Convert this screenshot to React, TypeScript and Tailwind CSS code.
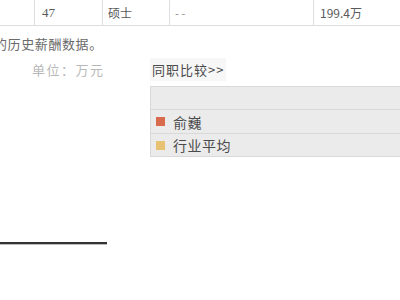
import React from "react";

const font = { fontFamily: '"Noto Sans CJK SC", "Liberation Sans", sans-serif' };

export default function App() {
  return (
    <div className="w-[400px] h-[300px] overflow-hidden bg-white" style={font}>
      {/* table row */}
      <div className="flex h-[26px] border-b border-[#dedede] text-[12px] text-[#5a5a5a] leading-[25px]">
        <div className="w-[35px] shrink-0 border-r border-[#dedede]" />
        <div className="w-[68px] shrink-0 border-r border-[#dedede] pl-[7px]" style={{ fontFamily: '"Liberation Serif", serif', fontSize: 13 }}>47</div>
        <div className="w-[67px] shrink-0 border-r border-[#dedede] pl-[5px]">硕士</div>
        <div className="w-[144px] shrink-0 border-r border-[#dedede] pl-[5px] text-[#999] tracking-[2px]">--</div>
        <div className="flex-1 pl-[6px]">199.4万</div>
      </div>

      {/* note */}
      <div className="mt-[9px] -ml-[6px] h-[17px] leading-[17px] text-[13px] tracking-[0.6px] text-[#6a6a6a] whitespace-nowrap">
        的历史薪酬数据。
      </div>

      {/* chart section */}
      <div className="flex mt-[9px]">
        <div className="w-[150px] shrink-0 pl-[32px] h-[17px] leading-[17px] text-[13px] tracking-[1.5px] text-[#b8b8b8] whitespace-nowrap">
          单位：万元
        </div>
        <div className="flex-1 flex flex-col">
          <div className="h-[17px] leading-[17px] text-[13px] tracking-[1px] text-[#4a4a4a] whitespace-nowrap">
            <span className="bg-[#f7f7f7] pl-[2px] pr-[2px] py-[2px]">同职比较&gt;&gt;</span>
          </div>
          <div className="mt-[8px] bg-[#ebebeb] border-t border-l border-[#d9d9d9] text-[14px] text-[#4a4a4a] tracking-[0.5px]">
            <div className="h-[23px] border-b border-[#d9d9d9]" />
            <div className="h-[24px] border-b border-[#d9d9d9] flex items-center pl-[5px] gap-[8px]">
              <span className="w-[9px] h-[9px] bg-[#d86b4e] inline-block" />
              <span className="leading-[22px]">俞巍</span>
            </div>
            <div className="h-[23px] border-b border-[#d9d9d9] flex items-center pl-[5px] gap-[8px]">
              <span className="w-[9px] h-[9px] bg-[#e7c273] inline-block" />
              <span className="leading-[22px]">行业平均</span>
            </div>
          </div>
        </div>
      </div>

      {/* axis line */}
      <div className="mt-[85px] w-[107px] h-[2px] bg-[#333] shadow-[0_1px_0_#bbb]" />
    </div>
  );
}
